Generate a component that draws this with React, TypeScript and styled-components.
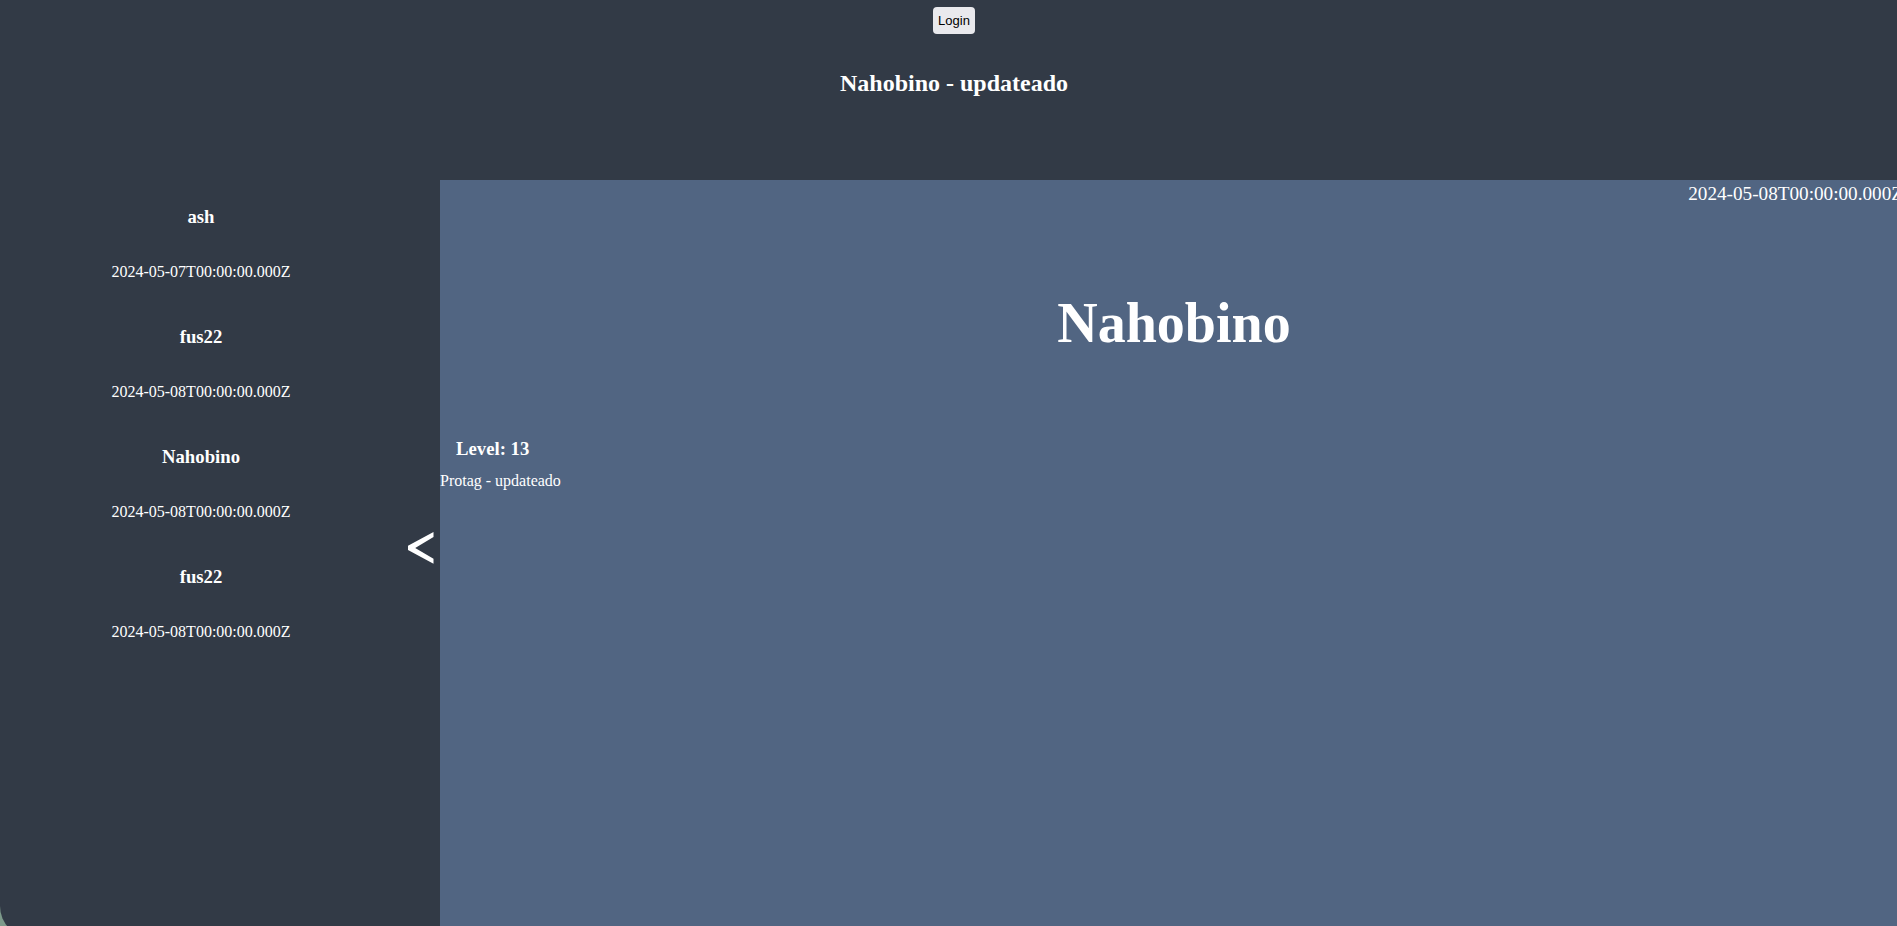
import React from "react";
import styled, { createGlobalStyle } from "styled-components";

const GlobalStyle = createGlobalStyle`
  html, body {
    margin: 0;
    padding: 0;
    overflow: hidden;
    background: #7d9a8b;
  }
  body {
    font-family: "Liberation Serif", "Times New Roman", serif;
    color: #ffffff;
  }
`;

const Shell = styled.div`
  width: 1908px;
  height: 938px;
  display: flex;
  flex-direction: column;
`;

const Header = styled.header`
  height: 180px;
  flex: none;
  background: #323a46;
  display: flex;
  flex-direction: column;
  align-items: center;
  padding-top: 7px;
  box-sizing: border-box;
`;

const LoginButton = styled.button`
  height: 27px;
  padding: 0 5px;
  border: none;
  border-radius: 4px;
  background: #e9e9ed;
  color: #000;
  font-family: "Liberation Sans", Arial, sans-serif;
  font-size: 13px;
  cursor: pointer;
`;

const HeaderTitle = styled.h2`
  margin: 34.6px 0 0;
  font-size: 24px;
  line-height: 28px;
  font-weight: bold;
`;

const Body = styled.div`
  flex: 1;
  display: flex;
  min-height: 0;
`;

const Sidebar = styled.aside`
  width: 440px;
  flex: none;
  background: #323a46;
  border-bottom-left-radius: 32px;
  display: flex;
`;

const List = styled.ul`
  width: 402px;
  margin: 0;
  padding: 26px 0 0;
  list-style: none;
  display: flex;
  flex-direction: column;
  gap: 45px;
`;

const Entry = styled.li`
  display: flex;
  flex-direction: column;
  align-items: center;
  gap: 35px;
`;

const EntryName = styled.h3`
  margin: 0;
  font-size: 18.72px;
  line-height: 22px;
  font-weight: bold;
`;

const EntryDate = styled.p`
  margin: 0;
  font-size: 16px;
  line-height: 18px;
`;

const ToggleColumn = styled.div`
  flex: 1;
  padding: 351.7px 0 0 6px;
`;

const Toggle = styled.button`
  border: none;
  background: none;
  padding: 0;
  display: block;
  cursor: pointer;
`;

const Main = styled.main`
  flex: 1;
  background: #516582;
  display: flex;
  flex-direction: column;
  padding-top: 2.5px;
`;

const StampLine = styled.div`
  text-align: right;
  padding-right: 5px;
  font-size: 19.2px;
  line-height: 22px;
`;

const HeroTitle = styled.h1`
  margin: 86.6px 0 0;
  text-align: center;
  font-size: 56px;
  line-height: 64px;
  font-weight: bold;
`;

const Stat = styled.h3`
  margin: 82.6px 0 0;
  padding-left: 16px;
  font-size: 18.72px;
  line-height: 22px;
  font-weight: bold;
`;

const Description = styled.p`
  margin: 12.6px 0 0;
  font-size: 16px;
  line-height: 18px;
`;

const entries = [
  { name: "ash", date: "2024-05-07T00:00:00.000Z" },
  { name: "fus22", date: "2024-05-08T00:00:00.000Z" },
  { name: "Nahobino", date: "2024-05-08T00:00:00.000Z" },
  { name: "fus22", date: "2024-05-08T00:00:00.000Z" },
];

const Chevron = () => (
  <svg width="26" height="32" viewBox="0 0 26 32">
    <polygon
      points="25.5,0 25.5,5 7.2,15.9 25.5,26.8 25.5,31.8 0,18 0,13.8"
      fill="#ffffff"
    />
  </svg>
);

export default function App() {
  return (
    <>
      <GlobalStyle />
      <Shell>
        <Header>
          <LoginButton>Login</LoginButton>
          <HeaderTitle>Nahobino - updateado</HeaderTitle>
        </Header>
        <Body>
          <Sidebar>
            <List>
              {entries.map((e, i) => (
                <Entry key={i}>
                  <EntryName>{e.name}</EntryName>
                  <EntryDate>{e.date}</EntryDate>
                </Entry>
              ))}
            </List>
            <ToggleColumn>
              <Toggle aria-label="collapse">
                <Chevron />
              </Toggle>
            </ToggleColumn>
          </Sidebar>
          <Main>
            <StampLine>2024-05-08T00:00:00.000Z</StampLine>
            <HeroTitle>Nahobino</HeroTitle>
            <Stat>Level: 13</Stat>
            <Description>Protag - updateado</Description>
          </Main>
        </Body>
      </Shell>
    </>
  );
}
